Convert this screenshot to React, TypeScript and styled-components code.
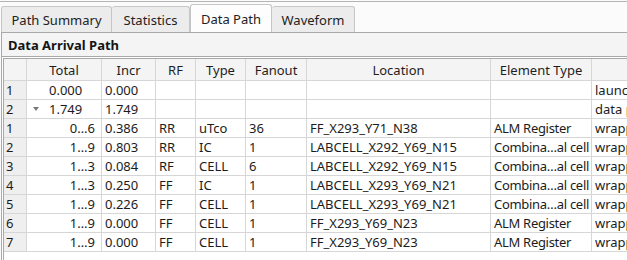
import React from "react";
import styled, { createGlobalStyle, css } from "styled-components";

const Global = createGlobalStyle`
  html, body { margin: 0; padding: 0; background: #ffffff; }
  body { font-family: "Noto Sans", "Open Sans", sans-serif; font-size: 13px; color: #1c1c1c; }
`;

const Screen = styled.div`
  width: 627px;
  height: 260px;
  overflow: hidden;
  box-sizing: border-box;
  padding-top: 1px;
  background: #fbfbfb;
`;

const TopRule = styled.div`
  height: 1px;
  background: #b4b4b4;
`;

const TabBar = styled.div`
  display: flex;
  align-items: flex-end;
  height: 30px;
  padding-left: 1px;
`;

const Tab = styled.div<{ $active?: boolean; $w: number }>`
  box-sizing: border-box;
  width: ${(p) => p.$w}px;
  height: ${(p) => (p.$active ? 28 : 26)}px;
  display: flex;
  align-items: center;
  justify-content: center;
  border: 1px solid #c6c6c6;
  border-bottom: none;
  border-left-width: ${(p) => (p.$active ? 1 : 0)}px;
  border-radius: 3px 3px 0 0;
  background: ${(p) => (p.$active ? "#fdfdfd" : "#ececec")};
  color: #222;
  padding-top: 1px;
  &:first-child { border-left-width: 1px; }
`;

const Frame = styled.div`
  margin-left: 1px;
  border-left: 1px solid #a9a9a9;
  border-top: 1px solid #a9a9a9;
  background: #ffffff;
  height: 240px;
`;

const PanelHeader = styled.div`
  height: 23px;
  display: flex;
  align-items: center;
  padding-left: 6px;
  background: #f4f4f4;
  border-bottom: 1px solid #a9a9a9;
  font-weight: 700;
  color: #141414;
`;

const Table = styled.div`
  margin-top: 1px;
  margin-left: 1px;
  border-left: 1px solid #a9a9a9;
  border-top: 1px solid #a9a9a9;
  height: 220px;
`;

const Row = styled.div<{ $header?: boolean }>`
  display: flex;
  height: ${(p) => (p.$header ? 22 : 19)}px;
  white-space: nowrap;
`;

const Cell = styled.div<{
  $w: number;
  $align?: "left" | "right" | "center";
  $head?: boolean;
  $gutter?: boolean;
  $indent?: number;
  $tight?: boolean;
}>`
  box-sizing: border-box;
  flex: 0 0 ${(p) => p.$w}px;
  width: ${(p) => p.$w}px;
  overflow: hidden;
  display: flex;
  align-items: center;
  border-right: 1px solid #d6d6d6;
  border-bottom: 1px solid #d6d6d6;
  padding: 0 ${(p) => (p.$align === "right" ? 6 : 1)}px 0 ${(p) => (p.$indent ?? 3)}px;
  letter-spacing: ${(p) => (p.$tight ? "-0.3px" : "normal")};
  justify-content: ${(p) =>
    p.$align === "right" ? "flex-end" : p.$align === "center" ? "center" : "flex-start"};
  ${(p) =>
    p.$head &&
    css`
      background: #f4f4f4;
      padding: 0;
      color: #1e1e1e;
      letter-spacing: normal;
    `}
  ${(p) =>
    p.$gutter &&
    css`
      background: #efefef;
      padding-left: 2px;
    `}
`;

const Arrow = styled.span`
  display: inline-block;
  width: 0;
  height: 0;
  border-left: 3px solid transparent;
  border-right: 3px solid transparent;
  border-top: 4px solid #7a7a7a;
  margin: 0 10px 0 0;
`;

const widths = [23, 75, 54, 40, 50, 61, 184, 101, 120];
const headers = ["", "Total", "Incr", "RF", "Type", "Fanout", "Location", "Element Type", ""];

type R = { n: string; total: string; kind: "top" | "parent" | "child"; cells: string[] };

const rows: R[] = [
  { n: "1", total: "0.000", kind: "top", cells: ["0.000", "", "", "", "", "", "launch edge time"] },
  { n: "2", total: "1.749", kind: "parent", cells: ["1.749", "", "", "", "", "", "data path"] },
  { n: "1", total: "0…6", kind: "child", cells: ["0.386", "RR", "uTco", "36", "FF_X293_Y71_N38", "ALM Register", "wrapper"] },
  { n: "2", total: "1…9", kind: "child", cells: ["0.803", "RR", "IC", "1", "LABCELL_X292_Y69_N15", "Combina…al cell", "wrapper"] },
  { n: "3", total: "1…3", kind: "child", cells: ["0.084", "RF", "CELL", "6", "LABCELL_X292_Y69_N15", "Combina…al cell", "wrapper"] },
  { n: "4", total: "1…3", kind: "child", cells: ["0.250", "FF", "IC", "1", "LABCELL_X293_Y69_N21", "Combina…al cell", "wrapper"] },
  { n: "5", total: "1…9", kind: "child", cells: ["0.226", "FF", "CELL", "1", "LABCELL_X293_Y69_N21", "Combina…al cell", "wrapper"] },
  { n: "6", total: "1…9", kind: "child", cells: ["0.000", "FF", "CELL", "1", "FF_X293_Y69_N23", "ALM Register", "wrapper"] },
  { n: "7", total: "1…9", kind: "child", cells: ["0.000", "FF", "CELL", "1", "FF_X293_Y69_N23", "ALM Register", "wrapper"] },
];

export default function App() {
  return (
    <>
      <Global />
      <Screen>
        <TopRule />
        <TabBar>
          <Tab $w={111}>Path Summary</Tab>
          <Tab $w={78}>Statistics</Tab>
          <Tab $w={82} $active>Data Path</Tab>
          <Tab $w={83}>Waveform</Tab>
        </TabBar>
        <Frame>
          <PanelHeader>Data Arrival Path</PanelHeader>
          <Table>
            <Row $header>
              {headers.map((h, i) => (
                <Cell key={i} $w={widths[i]} $head $align="center">
                  {h}
                </Cell>
              ))}
            </Row>
            {rows.map((r, ri) => (
              <Row key={ri}>
                <Cell $w={widths[0]} $gutter>
                  {r.n}
                </Cell>
                {r.kind === "child" ? (
                  <Cell $w={widths[1]} $align="right">
                    {r.total}
                  </Cell>
                ) : (
                  <Cell $w={widths[1]} $indent={r.kind === "parent" ? 6 : 22}>
                    {r.kind === "parent" && <Arrow />}
                    {r.total}
                  </Cell>
                )}
                {r.cells.map((c, ci) => (
                  <Cell key={ci} $w={widths[ci + 2]} $tight={ci === 5}>
                    {c}
                  </Cell>
                ))}
              </Row>
            ))}
          </Table>
        </Frame>
      </Screen>
    </>
  );
}
